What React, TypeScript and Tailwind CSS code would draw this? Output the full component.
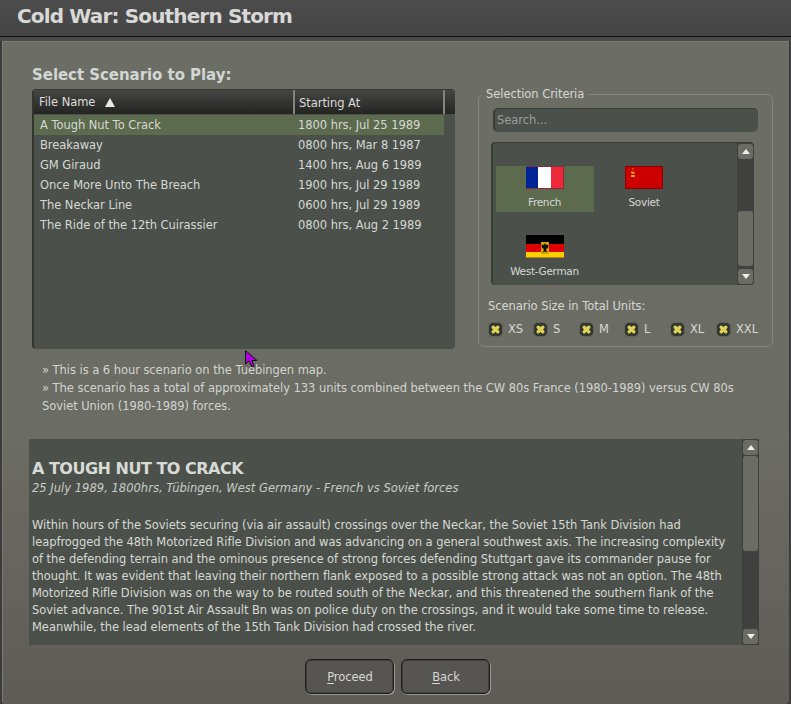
const font = { fontFamily: '"DejaVu Sans", sans-serif' };

const files = [
  ["A Tough Nut To Crack", "1800 hrs, Jul 25 1989"],
  ["Breakaway", "0800 hrs, Mar 8 1987"],
  ["GM Giraud", "1400 hrs, Aug 6 1989"],
  ["Once More Unto The Breach", "1900 hrs, Jul 29 1989"],
  ["The Neckar Line", "0600 hrs, Jul 29 1989"],
  ["The Ride of the 12th Cuirassier", "0800 hrs, Aug 2 1989"],
];
const sizes: [string, string][] = [
  ["XS", "w-[45px]"],
  ["S", "w-[46px]"],
  ["M", "w-[45px]"],
  ["L", "w-[46px]"],
  ["XL", "w-[46px]"],
  ["XXL", "w-[46px]"],
];

function Arrow({ up }: { up?: boolean }) {
  return (
    <div className="h-[15px] w-[15px] rounded-[3px] bg-[#6b6d65] flex items-center justify-center shrink-0">
      <svg width="8" height="5" viewBox="0 0 8 5">
        <path d={up ? "M0 5L4 0L8 5Z" : "M0 0L4 5L8 0Z"} fill="#eeeeea" />
      </svg>
    </div>
  );
}

function Check() {
  return (
    <div className="h-[15px] w-[15px] rounded-[5px] bg-[#33352f] border border-[#62645c] flex items-center justify-center shrink-0">
      <svg width="11" height="11" viewBox="0 0 11 11">
        <path d="M3.2 3.2L7.8 7.8M7.8 3.2L3.2 7.8" stroke="#dcd25a" strokeWidth="3.4" strokeLinecap="round" fill="none" />
      </svg>
    </div>
  );
}

function Emblem() {
  return (
    <svg width="8" height="12" viewBox="0 0 8 12" className="absolute left-[15px] top-[7px]">
      <rect x="0" y="0" width="8" height="12" fill="#d8a000" />
      <path d="M4 1L5 3L7.5 2.5L7 6L5 7L6 10.5L4 9.5L2 10.5L3 7L1 6L0.5 2.5L3 3Z" fill="#111" />
    </svg>
  );
}

function Flag({ kind }: { kind: "fr" | "su" | "de" }) {
  if (kind === "fr") {
    return (
      <div className="flex h-[26px] w-[38px] border-y border-r border-[#8a2a3a]">
        <div className="w-[12px] bg-[#002395]" />
        <div className="w-[13px] bg-white" />
        <div className="flex-1 bg-[#ed2939]" />
      </div>
    );
  }
  if (kind === "su") {
    return (
      <div className="relative h-[26px] w-[38px] bg-[#cc0000] border border-[#8a0000]">
        <svg width="8" height="10" viewBox="0 0 8 10" className="absolute left-[3px] top-[1px]">
          <path d="M4 0L5 1.5L3 1.5Z M2 4C2 6 4 7 6 5L5.5 3.5L4.5 4.5L3 3Z M2 7H6V9H2Z" fill="#f0a020" />
        </svg>
      </div>
    );
  }
  return (
    <div className="relative h-[26px] w-[38px] flex flex-col border-b border-[#b08a10]">
      <div className="h-[9px] bg-black" />
      <div className="h-[8px] bg-[#dd0000]" />
      <div className="flex-1 bg-[#ffce00]" />
      <Emblem />
    </div>
  );
}

function Track({ thumbTop, thumbH }: { thumbTop: number; thumbH: number }) {
  return (
    <div className="w-[17px] shrink-0 bg-[#40403e] flex flex-col items-center py-[1px]">
      <Arrow up />
      <div className="flex-1 w-[15px] flex flex-col py-[1px]">
        <div style={{ height: thumbTop }} className="shrink-0" />
        <div style={{ height: thumbH }} className="w-[15px] rounded-[3px] bg-[#6b6d65] shrink-0" />
      </div>
      <Arrow />
    </div>
  );
}

export default function App() {
  return (
    <div style={font} className="relative h-[704px] w-[791px] overflow-hidden bg-[#3c3c3a] text-[11.5px] tracking-[-0.05px] leading-[18px] text-[#d6d8d4] antialiased">
      <header className="h-[37px] bg-gradient-to-b from-[#4c4c4c] to-[#454545] border-b border-[#111] pl-[17px] flex items-center">
        <h1 className="text-[20px] font-bold leading-[30px] text-[#d8d8d6] pb-[5px] tracking-[-0.85px]">Cold War: Southern Storm</h1>
      </header>
      <div className="h-[4px] bg-[#4a4a48]" />
      <main className="ml-[2px] h-[663px] w-[787px] rounded-b-[4px] border-l border-t border-[#7a7c74] bg-gradient-to-b from-[#6c6e65] via-[#6b6c64] via-60% to-[#5f5c58] pl-[26px] flex flex-col">
        <div className="flex pt-[23px] h-[307px]">
          <div className="w-[425px] ml-[3px] shrink-0 flex flex-col">
            <h2 className="text-[15px] font-bold leading-[20px] text-[#d2d6d4] pb-[4px] tracking-[-0.05px]">Select Scenario to Play:</h2>
            <div className="h-[260px] w-[423px] rounded-[4px] bg-[#4b514a] border-l-2 border-t border-[#33352f] overflow-hidden relative">
              <div className="h-[24px] bg-gradient-to-b from-[#464644] to-[#242422] flex leading-[26px] text-[#dcdcdc]">
                <div className="w-[261px] pl-[5px] border-r-2 border-[#85857f] flex items-center">
                  File Name
                  <svg width="10" height="9" viewBox="0 0 10 9" className="ml-[10px]"><path d="M0 9L5 0L10 9Z" fill="#e8e8e8" /></svg>
                </div>
                <div className="w-[150px] pl-[4px] border-r-2 border-[#85857f]">Starting At</div>
              </div>
              <ul className="w-[410px] pt-[1px]">
                {files.map(([name, date], i) => (
                  <li key={name} className={`h-[20px] leading-[20px] flex ${i === 0 ? "bg-[#5c6a4e]" : ""}`}>
                    <span className="w-[264px] pl-[6px] shrink-0">{name}</span>
                    <span>{date}</span>
                  </li>
                ))}
              </ul>
            </div>
          </div>
          <fieldset className="ml-[21px] mt-[22px] h-[260px] w-[295px] rounded-[6px] border border-[#85877f] px-[9px] min-w-0">
            <legend className="ml-[-6px] px-[4px] leading-[14px] text-[#d6d8d4]">Selection Criteria</legend>
            <div className="mt-[7px] h-[24px] w-[265px] ml-[5px] rounded-[5px] bg-[#4b514a] border-l-2 border-t border-[#3a3c36] pl-[2px] leading-[22px] text-[#9a9e98]">Search...</div>
            <div className="mt-[10px] ml-[3px] h-[143px] w-[263px] rounded-[4px] bg-[#4b514a] border-l-2 border-t border-[#3a3c36] flex overflow-hidden">
              <div className="flex-1 grid grid-cols-[98px_99px] auto-rows-[69px] pt-[23px] pl-[3px] gap-x-[1px] text-center text-[10.5px] tracking-[-0.3px] leading-[20px]">
                <div className="h-[46px] pr-[1px] bg-[#5c6a4e] flex flex-col items-center"><Flag kind="fr" /><span className="mt-[3px]">French</span></div>
                <div className="h-[46px] pr-[1px] flex flex-col items-center"><Flag kind="su" /><span className="mt-[3px]">Soviet</span></div>
                <div className="h-[46px] pr-[1px] flex flex-col items-center"><Flag kind="de" /><span className="mt-[3px]">West-German</span></div>
              </div>
              <Track thumbTop={51} thumbH={55} />
            </div>
            <div className="mt-[12px] leading-[18px]">Scenario Size in Total Units:</div>
            <div className="mt-[5px] flex">
              {sizes.map(([s, w]) => (
                <div key={s} className={`${w} flex items-center gap-[5px]`}><Check />{s}</div>
              ))}
            </div>
          </fieldset>
        </div>
        <section className="ml-[13px] w-[700px] pt-[12px] h-[90px] leading-[18px] text-[#d2d4d0]">
          <p>» This is a 6 hour scenario on the Tuebingen map.</p>
          <p>» The scenario has a total of approximately 133 units combined between the CW 80s France (1980-1989) versus CW 80s Soviet Union (1980-1989) forces.</p>
        </section>
        <section className="h-[206px] w-[730px] bg-[#4b514a] flex">
          <div className="flex-1 pl-[3px] pr-[12px] pt-[19px] leading-[17px] text-[#d6d8d4] overflow-hidden">
            <h3 className="text-[16px] font-bold leading-[21px] tracking-[-0.5px] text-[#d8dad6]">A TOUGH NUT TO CRACK</h3>
            <p className="italic leading-[18px] tracking-[0.02px] text-[#c8ccc8]">25 July 1989, 1800hrs, Tübingen, West Germany - French vs Soviet forces</p>
            <p className="mt-[20px]">Within hours of the Soviets securing (via air assault) crossings over the Neckar, the Soviet 15th Tank Division had leapfrogged the 48th Motorized Rifle Division and was advancing on a general southwest axis. The increasing complexity of the defending terrain and the ominous presence of strong forces defending Stuttgart gave its commander pause for thought. It was evident that leaving their northern flank exposed to a possible strong attack was not an option. The 48th Motorized Rifle Division was on the way to be routed south of the Neckar, and this threatened the southern flank of the Soviet advance. The 901st Air Assault Bn was on police duty on the crossings, and it would take some time to release. Meanwhile, the lead elements of the 15th Tank Division had crossed the river.</p>
          </div>
          <Track thumbTop={0} thumbH={95} />
        </section>
        <div className="flex justify-center gap-[7px] mt-[14px] pr-[24px]">
          {["Proceed", "Back"].map((b) => (
            <button key={b} className="h-[35px] w-[89px] pl-[2px] rounded-[6px] border border-[#1c1c1c] bg-[#565552] shadow-[1px_1px_0_#9a9a96,inset_0_0_0_1px_#41413e] text-[#d6d8d4]">
              <span className="underline underline-offset-2 decoration-1">{b[0]}</span>{b.slice(1)}
            </button>
          ))}
        </div>
      </main>
      <svg width="14" height="18" viewBox="0 0 14 18" className="absolute left-[245px] top-[350px]">
        <path d="M0.5 0.5V14L4 11L7 17L9 16L7 10.5H12Z" fill="#b000e0" stroke="#111" strokeWidth="1" />
      </svg>
    </div>
  );
}
